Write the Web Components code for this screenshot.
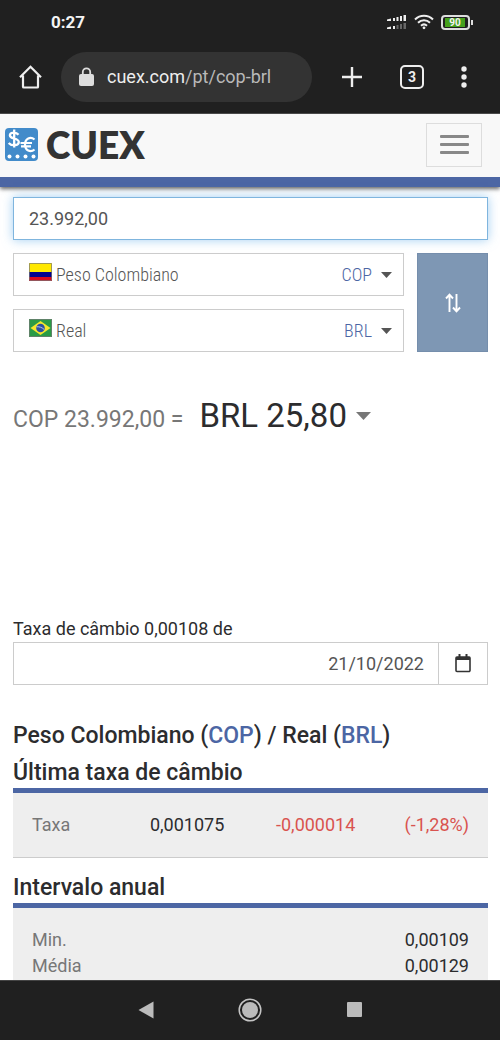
<!DOCTYPE html>
<html lang="pt">
<head>
<meta charset="utf-8">
<meta name="viewport" content="width=device-width, initial-scale=1">
<title>COP BRL - CUEX</title>
<style>
  html, body { margin: 0; height: 100%; }
  body { font-family: Roboto, "Liberation Sans", sans-serif; font-size: 18px; line-height: 26px; color: #2c2c2e; background: #fff; --brand: #4c66a4; --gutter: 12px 0 13px; }
</style>
</head>
<body>
<phone-screen>
  <status-bar slot="top" time="0:27" battery="90"></status-bar>
  <browser-bar slot="top" host="cuex.com" path="/pt/cop-brl" tabs="3"></browser-bar>
  <site-header></site-header>
  <currency-converter>
    <amount-field value="23.992,00"></amount-field>
    <currency-select slot="pair" code="COP" name="Peso Colombiano" label="De">
      <svg width="23" height="18" viewBox="0 0 23 18" aria-hidden="true"><path fill="#ffe800" d="M0 0h23v9H0z"/><path fill="#00008e" d="M0 9h23v5H0z"/><path fill="#d8071c" d="M0 14h23v4H0z"/><path fill="none" stroke="#777" stroke-opacity=".7" d="M.5.5h22v17H.5z"/></svg>
    </currency-select>
    <currency-select slot="pair" code="BRL" name="Real" label="Para">
      <svg width="23" height="18" viewBox="0 0 23 18" aria-hidden="true"><path fill="#2a9b46" d="M0 0h23v18H0z"/><path fill="#f5e62c" d="M11.500 2 21.500 9l-10 7L1.500 9z"/><circle cx="11.500" cy="9" r="4.300" fill="#2c4fa3"/><path fill="none" stroke="#b9cbe4" d="M7.600 7.800c2.600-.3 5.300.5 7.600 2.700"/><path fill="none" stroke="#777" stroke-opacity=".7" d="M.5.5h22v17H.5z"/></svg>
    </currency-select>
    <conversion-result slot="result" from="COP 23.992,00 =" to="BRL 25,80"></conversion-result>
  </currency-converter>
  <rate-date label="Taxa de câmbio 0,00108 de" value="21/10/2022"></rate-date>
  <pair-title></pair-title>
  <rate-panel heading="Última taxa de câmbio">
    <latest-rate></latest-rate>
  </rate-panel>
  <rate-panel heading="Intervalo anual">
    <year-range></year-range>
  </rate-panel>
  <nav-bar slot="bottom"></nav-bar>
</phone-screen>

<script>
function define(name, render) {
  customElements.define(name, class extends HTMLElement {
    constructor() {
      super();
      this.attachShadow({ mode: 'open' });
    }
    connectedCallback() {
      this.shadowRoot.innerHTML = '<style>:host,*{box-sizing:border-box}button,input,select{font:inherit;color:inherit;margin:0;border-radius:0}svg{display:block}</style>' + render(a => this.getAttribute(a) || '');
    }
  });
}

define('phone-screen', () => `
  <style>
    :host { display: flex; flex-direction: column; height: 100vh; overflow: hidden; }
    .top, .bottom { flex: none; background: #202020; }
    .top { border-bottom: 1px solid #4a4a4a; }
    main { flex: 1; min-height: 0; overflow: hidden; }
  </style>
  <div class="top"><slot name="top"></slot></div>
  <main><slot></slot></main>
  <div class="bottom"><slot name="bottom"></slot></div>`);

define('status-bar', a => `
  <style>
    :host { display: flex; align-items: center; height: 44px; padding: 0 27px 0 51px; color: #f4f4f4; }
    time { flex: 1; font-size: 17px; font-weight: 700; }
    .icons { display: flex; align-items: center; gap: 7px; }
    .battery { display: flex; align-items: center; }
    .cell { border: 2px solid #dedede; border-radius: 4px; padding: 1px 3px 1px 2px; width: 29px; height: 15px; }
    .level { background: #45a01c; height: 9px; font-size: 10px; line-height: 9px; font-weight: 700; text-align: center; }
    .tip { width: 2px; height: 5px; background: #dedede; margin-left: 1px; }
  </style>
  <time>${a('time')}</time>
  <div class="icons">
    <svg width="20" height="16" viewBox="0 0 20 16" aria-hidden="true"><g fill="#eee"><path d="M0 5.500l4-1V7H0zM6 4h2v3H6zM9.500 3h2v4h-2zM13 2h2v5h-2zM16.500 1H19v6h-2.500zM0 13.500l4-1V15H0zM6 12h2v3H6z"/></g><path fill="#666" d="M9.500 11h2v4h-2zM13 10h2v5h-2zM16.500 9H19v6h-2.500z"/></svg>
    <svg width="20" height="16" viewBox="0 0 20 16" fill="none" stroke="#eee" stroke-width="2" aria-hidden="true"><path d="M1 5.500c5-5 13-5 18 0M4 8.800c3.400-3.300 8.600-3.300 12 0M7 11.800c1.800-1.700 4.200-1.700 6 0"/><circle cx="10" cy="13.800" r="1.400" fill="#eee" stroke="none"/></svg>
    <div class="battery"><div class="cell"><div class="level">${a('battery')}</div></div><div class="tip"></div></div>
  </div>`);

define('browser-bar', a => `
  <style>
    :host { display: flex; align-items: center; height: 69px; padding: 0 33px 3px 18px; color: #eee; }
    button { background: none; border: 0; padding: 0; }
    .url { flex: 1; display: flex; align-items: center; gap: 13px; height: 50px; margin: 0 29px 0 18px; padding: 0 18px; border-radius: 25px; background: #333; }
    .url a { color: #eee; text-decoration: none; }
    .url span { color: #b9b9b9; }
    .actions { display: flex; align-items: center; gap: 37px; }
    .tabs { width: 24px; height: 24px; border: 2px solid #eee; border-radius: 5px; font-size: 14px; line-height: 20px; font-weight: 700; }
  </style>
  <button aria-label="Início"><svg width="25" height="26" viewBox="0 0 25 26" fill="none" stroke="#eee" stroke-width="2.200"><path d="M2 13.300 12.500 2.800 23 13.300M5 11.500v11.200q0 .8.800.8h13.400q.8 0 .8-.8V11.500"/></svg></button>
  <div class="url">
    <svg width="15" height="20" viewBox="0 0 15 20" aria-hidden="true"><rect y="7" width="15" height="12" rx="2" fill="#ddd"/><path d="M3.800 8V5a3.700 3.700 0 0 1 7.400 0v3" fill="none" stroke="#ddd" stroke-width="1.800"/></svg>
    <a href="#">${a('host')}<span>${a('path')}</span></a>
  </div>
  <div class="actions">
    <button aria-label="Nova guia"><svg width="22" height="22" viewBox="0 0 22 22" stroke="#eee" stroke-width="2.400"><path d="M11 1v20M1 11h20"/></svg></button>
    <button class="tabs" aria-label="Guias abertas">${a('tabs')}</button>
    <button aria-label="Menu"><svg width="6" height="22" viewBox="0 0 6 22" fill="#eee"><circle cx="3" cy="3" r="2.700"/><circle cx="3" cy="11" r="2.700"/><circle cx="3" cy="19" r="2.700"/></svg></button>
  </div>`);

define('site-header', () => `
  <style>
    :host { display: flex; align-items: center; justify-content: space-between; height: 73px; padding: 0 18px 2px 5px; background: #f8f8f8; border-bottom: 10px solid var(--brand); box-shadow: 0 2px 4px rgba(0,0,0,.6); }
    a { display: flex; align-items: center; gap: 8px; color: #333; text-decoration: none; font: 800 37px/44px Lato, sans-serif; }
    button { display: grid; gap: 5px; place-content: center; width: 56px; height: 44px; background: none; border: 1px solid #ddd; }
    i { width: 29px; height: 3px; border-radius: 1px; background: #888; }
  </style>
  <a href="#"><svg width="33" height="34" viewBox="0 0 33 34" aria-hidden="true"><rect width="33" height="33" rx="4" fill="#428bca"/><g fill="none" stroke="#fff" stroke-width="2.300"><path d="M13.500 6.700C11 3.500 4.800 4 4.900 7.400c.1 3.900 8.900 2.300 8.900 6.600 0 3.900-7.300 4.200-10.100.9M9.200 1.500v18"/><path d="M29.500 11.500c-4-3.500-9.500-1-9.500 5s5.500 8.500 9.500 5M15.500 15h11.500M16 18.400h10" stroke-width="2.200"/></g><g fill="#fff"><circle cx="4.500" cy="28.500" r="2"/><circle cx="12.500" cy="28.500" r="2"/><circle cx="20.500" cy="28.500" r="2"/><circle cx="28.500" cy="28.500" r="2"/></g></svg>CUEX</a>
  <button aria-label="Menu"><i></i><i></i><i></i></button>`);

define('currency-converter', () => `
  <style>
    :host { display: grid; gap: 13px; padding: 10px var(--gutter); }
    .row { display: grid; grid-template-columns: 1fr 71px; gap: 13px; }
    .pair { display: grid; gap: 13px; }
    button { display: grid; place-items: center; background: #7e97b4; border: 1px solid #758eac; padding: 0; }
  </style>
  <slot></slot>
  <div class="row">
    <div class="pair"><slot name="pair"></slot></div>
    <button aria-label="Inverter moedas"><svg width="16" height="20" viewBox="0 0 16 20" fill="none" stroke="#fff" stroke-width="1.900"><path d="M4.500 19V2M1 5.500l3.500-3.800L8 5.500M11.500 1v17M8 14.500l3.500 3.800 3.500-3.800"/></svg></button>
  </div>
  <slot name="result"></slot>`);

define('amount-field', a => `
  <style>
    :host { display: block; }
    input { display: block; width: 100%; height: 43px; padding: 0 15px; border: 1px solid #7fb5de; background: #fff; color: #555; box-shadow: 0 0 10px rgba(102,175,233,.6); outline: 0; }
  </style>
  <input aria-label="Valor" value="${a('value')}">`);

define('currency-select', a => `
  <style>
    :host { display: grid; height: 43px; font-family: "Roboto Condensed", Roboto, sans-serif; font-weight: 300; }
    select, .face { grid-area: 1 / 1; min-width: 0; }
    select { appearance: none; width: 100%; border: 1px solid #ccc; background: #fff; padding: 0 80px 0 42px; color: #555; }
    .face { z-index: 1; display: flex; align-items: center; padding: 0 12px 0 16px; pointer-events: none; }
    .flag { flex: 1; }
    .code { color: var(--brand); margin-right: 9px; }
  </style>
  <select aria-label="${a('label')}"><option>${a('name')}</option></select>
  <div class="face"><div class="flag"><slot></slot></div><span class="code">${a('code')}</span><svg width="11" height="6" viewBox="0 0 11 6" aria-hidden="true"><path fill="#555" d="M0 0h11L5.500 6z"/></svg></div>`);

define('conversion-result', a => `
  <style>
    :host { display: flex; align-items: baseline; gap: 16px; padding-top: 27px; line-height: 48px; }
    .from { font-size: 23px; color: #777; }
    button { display: flex; align-items: center; gap: 9px; padding: 0; border: 0; background: none; font-size: 33px; line-height: 48px; }
  </style>
  <span class="from">${a('from')}</span>
  <button>${a('to')}<svg width="15" height="8" viewBox="0 0 15 8" aria-hidden="true"><path fill="#777" d="M0 0h15L7.500 8z"/></svg></button>`);

define('rate-date', a => `
  <style>
    :host { display: block; padding: 172px var(--gutter); }
    label { display: block; }
    .group { display: flex; height: 43px; border: 1px solid #ccc; }
    input { flex: 1; min-width: 0; border: 0; padding: 0 14px; text-align: right; color: #555; background: #fff; outline: 0; }
    button { display: grid; place-items: center; width: 49px; border: 0; border-left: 1px solid #ccc; background: #fff; padding: 0; }
  </style>
  <label for="date">${a('label')}</label>
  <div class="group"><input id="date" value="${a('value')}"><button aria-label="Abrir calendário"><svg width="16" height="19" viewBox="0 0 16 19" fill="none" stroke="#333" stroke-width="1.600"><rect x="1" y="3" width="14" height="14.500" rx="1"/><path d="M1 4.500h14" stroke-width="3"/><path d="M4.500 0v4M11.500 0v4" stroke-width="2"/></svg></button></div>`);

define('pair-title', () => `
  <style>
    :host { display: block; padding: 32px var(--gutter); }
    h1 { margin: 0; font-size: 23px; line-height: 38px; font-weight: 500; }
    a { color: var(--brand); text-decoration: none; }
  </style>
  <h1>Peso Colombiano (<a href="#">COP</a>) / Real (<a href="#">BRL</a>)</h1>`);

define('rate-panel', a => `
  <style>
    :host { display: block; padding: 0 var(--gutter); }
    h2 { margin: 0; padding-top: 3px; font-size: 23px; line-height: 30px; font-weight: 500; }
    .panel { margin-bottom: 12px; border-top: 5px solid var(--brand); border-bottom: 1px solid #ccc; background: #eee; padding: 19px; }
  </style>
  <h2>${a('heading')}</h2>
  <div class="panel"><slot></slot></div>`);

const tableStyle = `
  <style>
    :host { display: block; }
    table { width: 100%; border-collapse: collapse; table-layout: fixed; }
    th, td { padding: 0; line-height: 26px; }
    th { text-align: left; font-weight: 400; color: #777; }
    td { text-align: right; }
    .down { color: #d9534f; }
    .name, .value { width: 22%; }
    .change { width: 30%; }
  </style>`;

define('latest-rate', () => tableStyle + `
  <table>
    <colgroup><col class="name"><col class="value"><col class="change"><col></colgroup>
    <tr><th scope="row">Taxa</th><td>0,001075</td><td class="down">-0,000014</td><td class="down">(-1,28%)</td></tr>
  </table>`);

define('year-range', () => tableStyle + `
  <table>
    <tr><th scope="row">Min.</th><td>0,00109</td></tr>
    <tr><th scope="row">Média</th><td>0,00129</td></tr>
  </table>`);

define('nav-bar', () => `
  <style>
    :host { display: flex; justify-content: center; align-items: center; gap: 80px; height: 60px; padding-bottom: 2px; border-top: 1px solid #444; }
    button { display: grid; place-items: center; width: 24px; height: 24px; border: 0; background: none; padding: 0; }
  </style>
  <button aria-label="Voltar"><svg width="16" height="18" viewBox="0 0 16 18"><path fill="#bbb" d="M15.500.5v17L.5 9z"/></svg></button>
  <button aria-label="Início"><svg width="24" height="24" viewBox="0 0 24 24"><circle cx="12" cy="12" r="10.800" fill="none" stroke="#c4c4c4" stroke-width="1.500"/><circle cx="12" cy="12" r="8" fill="#bbb"/></svg></button>
  <button aria-label="Recentes"><svg width="15" height="15" viewBox="0 0 15 15"><rect width="15" height="15" rx="1" fill="#bbb"/></svg></button>`);
</script>
</body>
</html>
